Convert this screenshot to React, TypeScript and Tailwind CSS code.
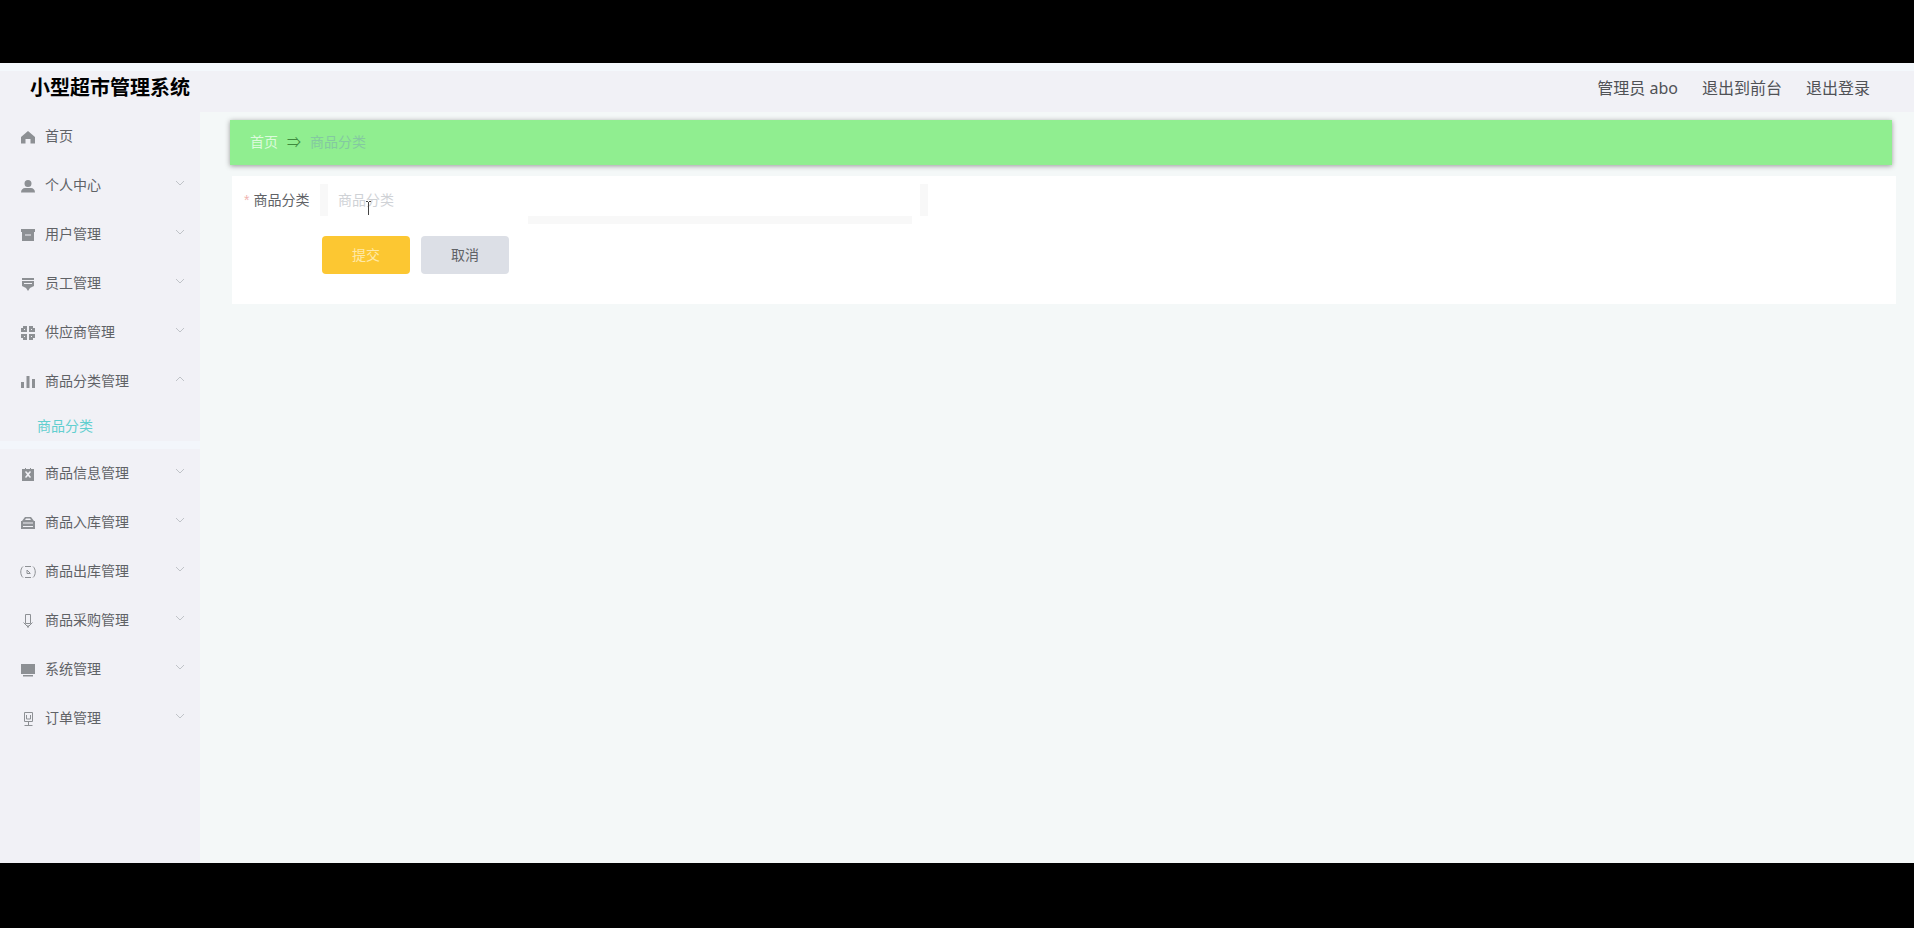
import { useState } from "react";
import type { ReactNode } from "react";

type MenuEntry = {
  name: string;
  icon: ReactNode;
  arrow?: "down" | "up";
  children?: string[];
};

// Solid 16x16 glyphs used in the side menu, holes are cut with evenodd.
function Glyph({ d, line }: { d: string; line?: boolean }) {
  return (
    <svg
      viewBox="0 0 16 16"
      className="h-4 w-4 shrink-0"
      fill={line ? "none" : "currentColor"}
      stroke={line ? "currentColor" : "none"}
      fillRule="evenodd"
      aria-hidden="true"
    >
      <path d={d} />
    </svg>
  );
}

const menus: MenuEntry[] = [
  { name: "首页", icon: <Glyph d="M8 2 15 8v6.500h-4.500V10h-5v4.500H1V8z" /> },
  {
    name: "个人中心",
    arrow: "down",
    icon: <Glyph d="M8 2a3.500 3.500 0 1 1 0 7 3.500 3.500 0 0 1 0-7zM1 14.500c0-3 2-4.500 4-4.500h6c2 0 4 1.500 4 4.500z" />,
  },
  {
    name: "用户管理",
    arrow: "down",
    icon: <Glyph d="M1 2h14v3H1zM2 5h12v9H2zM5 7.500v1h6v-1z" />,
  },
  {
    name: "员工管理",
    arrow: "down",
    icon: <Glyph d="M2 2h12v2H2zM2 5h12v5l-4 2-2 3-2-3-4-2zM4 7v1h8V7z" />,
  },
  {
    name: "供应商管理",
    arrow: "down",
    icon: <Glyph d="M3 1h4v6H1V3h2zM9 1h4v2h2v4H9zM1 9h6v6H3v-2H1zM9 9h6v4h-2v2H9zM4 4v1h1V4zM11 4v1h1V4zM4 11v1h1v-1zM11 11v1h1v-1z" />,
  },
  {
    name: "商品分类管理",
    arrow: "up",
    icon: <Glyph d="M1 8h3v6H1zM6.500 2h3v12h-3zM12 5h3v9h-3z" />,
    children: ["商品分类"],
  },
  {
    name: "商品信息管理",
    arrow: "down",
    icon: <Glyph d="M2 3h3V2h1v1h4V2h1v1h3v12H2zM5 6l2 2.500L5 11l1 1 2-2 2 2 1-1-2-2.500L11 6l-1-1-2 2-2-2z" />,
  },
  {
    name: "商品入库管理",
    arrow: "down",
    icon: <Glyph d="M2 6 5 2h6l3 4h1v8H1V6zM5 5h6L10 3.500H6zM3 7.500v1h10v-1zM3 11v1h10v-1z" />,
  },
  {
    name: "商品出库管理",
    arrow: "down",
    icon: <Glyph line d="M3 2.500C0 5 0 11 3 13.500M13 2.500c3 2.500 3 8.500 0 11M5 2.500h6M5 13.500h6M7 6v3.500h3.500M7 6l3 3" />,
  },
  {
    name: "商品采购管理",
    arrow: "down",
    icon: <Glyph line d="M5.500 1.500h5v9h-5zM3.500 9.500 8 14l4.500-4.500M8 12v3" />,
  },
  {
    name: "系统管理",
    arrow: "down",
    icon: <Glyph d="M1 2h14v10H1zM3 13h10v1.500H3z" />,
  },
  {
    name: "订单管理",
    arrow: "down",
    icon: <Glyph line d="M4.500 1.500h8v9h-8zM6.500 4v4h4V4M8.500 10.500v4M4.500 14.500h8" />,
  },
];

function Chevron({ up }: { up: boolean }) {
  return (
    <svg
      viewBox="0 0 8 6"
      className="mb-1 h-[6px] w-2 shrink-0"
      fill="none"
      stroke="#c0c3c8"
      aria-hidden="true"
    >
      <path d={up ? "M0 5l4-4 4 4" : "M0 1l4 4 4-4"} />
    </svg>
  );
}

function SideMenu() {
  const [active, setActive] = useState("商品分类");

  return (
    <aside className="w-[200px] shrink-0 bg-[#f1f1f6] text-[#606266]">
      <ul>
        {menus.map((m) => (
          <li key={m.name}>
            <button
              type="button"
              className="flex h-[49px] w-full items-center gap-[9px] pr-4 pb-px pl-5 text-left text-sm"
            >
              <span className="mt-px text-[#8d9094]">{m.icon}</span>
              <span className="flex-1">{m.name}</span>
              {m.arrow && <Chevron up={m.arrow === "up"} />}
            </button>
            {m.children?.map((c) => (
              <button
                key={c}
                type="button"
                onClick={() => setActive(c)}
                className={
                  c === active
                    ? "flex h-[43px] w-full items-center border-b-8 border-[#f3f6fb] pt-1 pl-[37px] text-sm text-[#62cfcf]"
                    : "flex h-[43px] w-full items-center border-b-8 border-[#f3f6fb] pt-1 pl-[37px] text-sm"
                }
              >
                {c}
              </button>
            ))}
          </li>
        ))}
      </ul>
    </aside>
  );
}

function Header() {
  return (
    <header className="flex h-[49px] shrink-0 items-center justify-between border-t-8 border-[#f4f8fc] bg-[#f1f1f6] pr-11 pb-2 pl-[30px]">
      <h1 className="text-xl font-bold text-black">小型超市管理系统</h1>
      <nav className="flex items-center gap-6 font-['Noto_Sans','Noto_Sans_CJK_SC',sans-serif] text-base text-[#505256]">
        <span>管理员 abo</span>
        <a href="#front">退出到前台</a>
        <a href="#logout">退出登录</a>
      </nav>
    </header>
  );
}

// Text pointer resting over the input.
function TextCursor() {
  return (
    <svg
      viewBox="0 0 7 16"
      className="pointer-events-none absolute top-4 left-[45px] h-4 w-[7px]"
      fill="none"
      stroke="#444"
      aria-hidden="true"
    >
      <path d="M1 1.500h2M4 1.500h2M3.500 2v13" />
    </svg>
  );
}

function CategoryForm() {
  const [value, setValue] = useState("");

  return (
    <form
      onSubmit={(e) => e.preventDefault()}
      className="mt-[11px] mr-[18px] ml-8 h-32 bg-white pt-2 pl-3"
    >
      <div className="flex h-8 items-center">
        <label htmlFor="category" className="flex w-[76px] shrink-0 items-center gap-1 text-sm text-[#606266]">
          <span className="text-[#f0b4b0]">*</span>
          商品分类
        </label>
        <div className="relative">
          <input
            id="category"
            value={value}
            onChange={(e) => setValue(e.target.value)}
            placeholder="商品分类"
            className="block h-8 w-[608px] border-x-8 border-[#f8f8f8] bg-white px-[10px] text-sm outline-none placeholder:text-[#cfd2d6]"
          />
          <TextCursor />
        </div>
      </div>
      <div className="ml-[284px] h-2 w-96 bg-[#f8f8f8]" />
      <div className="mt-3 flex gap-[11px] pl-[78px]">
        <button type="submit" className="h-[38px] w-[88px] rounded bg-[#fcc732] pb-px text-sm text-[#ffe9a8]">
          提交
        </button>
        <button type="button" className="h-[38px] w-[88px] rounded bg-[#dcdfe6] pb-px text-sm text-[#606266]">
          取消
        </button>
      </div>
    </form>
  );
}

export default function App() {
  return (
    <div className="flex min-h-screen flex-col border-t-[63px] border-b-[65px] border-black bg-[#f4f8f8] font-['Liberation_Sans','Noto_Sans_CJK_SC',sans-serif]">
      <Header />
      <div className="flex flex-1">
        <SideMenu />
        <main className="min-w-0 flex-1">
          <nav
            aria-label="breadcrumb"
            className="mt-2 mr-[22px] ml-[30px] flex h-[45px] items-center gap-[9px] bg-[#90ee90] pb-px pl-5 text-sm shadow-[0_1px_5px_#999]"
          >
            <a href="#home" className="text-[#dcfbdc]">首页</a>
            <span className="text-[#3f8a3f]">⇒</span>
            <span className="text-[#84c9a0]">商品分类</span>
          </nav>
          <CategoryForm />
        </main>
      </div>
    </div>
  );
}
